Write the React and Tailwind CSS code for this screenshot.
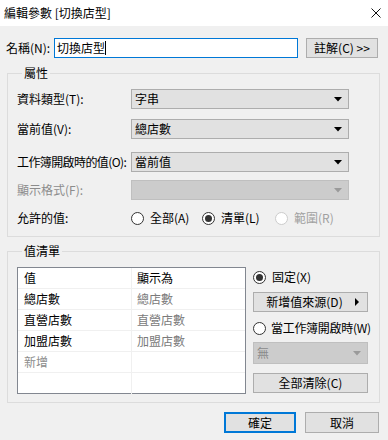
import React from "react";

const FONT = { fontFamily: '"Noto Sans CJK TC", "Noto Sans", sans-serif' };

function Arrow({ disabled }) {
  return (
    <svg width="8" height="5" viewBox="0 0 8 5" className="shrink-0">
      <polygon points="0,0 8,0 4,4.5" fill={disabled ? "#9a9a9a" : "#000"} />
    </svg>
  );
}

function Combo({ value, disabled, className = "" }) {
  return (
    <div
      className={
        "flex shrink-0 items-center justify-between border pl-[3px] pr-[6px] " +
        (disabled ? "bg-[#cccccc] border-[#bfbfbf] text-[#8a8a8a] " : "bg-[#e1e1e1] border-[#adadad] text-black ") +
        className
      }
    >
      <span>{value}</span>
      <Arrow disabled={disabled} />
    </div>
  );
}

function Radio({ checked, disabled }) {
  return (
    <span
      className={
        "flex h-[13px] w-[13px] shrink-0 items-center justify-center rounded-full border bg-white " +
        (disabled ? "border-[#cccccc]" : "border-[#333333]")
      }
    >
      {checked && <span className="h-[7px] w-[7px] rounded-full bg-[#333333]" />}
    </span>
  );
}

function Btn({ children, className = "" }) {
  return (
    <div className={"flex shrink-0 items-center justify-center whitespace-nowrap border border-[#adadad] bg-[#e1e1e1] " + className}>
      {children}
    </div>
  );
}

export default function App() {
  const rows = [
    ["值", "顯示為", true],
    ["總店數", "總店數"],
    ["直營店數", "直營店數"],
    ["加盟店數", "加盟店數"],
    ["新增", ""],
    ["", ""],
  ];
  return (
    <div style={FONT} className="h-[440px] w-[388px] overflow-hidden whitespace-nowrap bg-[#f0f0f0] text-[12px] leading-[16px] text-black">
      {/* Title bar */}
      <div className="flex h-[26px] items-center justify-between bg-white pl-[4px] pr-[7px]">
        <span className="text-[12px]">編輯參數 [切換店型]</span>
        <svg width="10" height="10" viewBox="0 0 10 10">
          <path d="M0.5 0.5 L9.5 9.5 M9.5 0.5 L0.5 9.5" stroke="#111" strokeWidth="1" />
        </svg>
      </div>

      {/* Name row */}
      <div className="mt-[12px] flex h-[20px] items-center pl-[6px]">
        <span className="w-[48px] shrink-0">名稱(N):</span>
        <div className="flex h-[20px] w-[244px] shrink-0 items-center border border-[#0078d7] bg-white pl-[2px]">
          <span>切換店型</span>
          <span className="h-[14px] w-px bg-black" />
        </div>
        <Btn className="ml-[8px] h-[20px] w-[72px]">註解(C) &gt;&gt;</Btn>
      </div>

      {/* 屬性 group */}
      <fieldset className="mx-[7px] mt-[7px] w-[373px] border border-[#dcdcdc] pb-[8px] pl-[9px]">
        <legend className="ml-[5px] px-[2px]">屬性</legend>
        <div className="mt-[8px] flex h-[20px] items-center">
          <span className="w-[114px] shrink-0">資料類型(T):</span>
          <Combo value="字串" className="h-[20px] w-[218px]" />
        </div>
        <div className="mt-[10px] flex h-[20px] items-center">
          <span className="w-[114px] shrink-0">當前值(V):</span>
          <Combo value="總店數" className="h-[20px] w-[218px]" />
        </div>
        <div className="mt-[13px] flex h-[20px] items-center">
          <span className="w-[114px] shrink-0 tracking-[-0.6px]">工作簿開啟時的值(O):</span>
          <Combo value="當前值" className="h-[20px] w-[218px]" />
        </div>
        <div className="mt-[8px] flex h-[20px] items-center">
          <span className="w-[114px] shrink-0 text-[#8c8c8c]">顯示格式(F):</span>
          <Combo value="" disabled className="h-[20px] w-[218px]" />
        </div>
        <div className="mt-[8px] flex h-[20px] items-center">
          <span className="w-[114px] shrink-0">允許的值:</span>
          <div className="flex items-center">
            <Radio />
            <span className="ml-[6px] w-[52px]">全部(A)</span>
            <Radio checked />
            <span className="ml-[6px] w-[54px]">清單(L)</span>
            <Radio disabled />
            <span className="ml-[6px] text-[#a0a0a0]">範圍(R)</span>
          </div>
        </div>
      </fieldset>

      {/* 值清單 group */}
      <fieldset className="mx-[7px] mt-[6px] w-[373px] border border-[#dcdcdc] pb-[8px] pl-[9px]">
        <legend className="ml-[5px] px-[2px]">值清單</legend>
        <div className="mt-[8px] flex">
          <div className="flex h-[127px] w-[229px] shrink-0 flex-col border border-[#828790] bg-white">
            {rows.map((r, i) => (
              <div
                key={i}
                className={"flex h-[21px] shrink-0 " + (i < rows.length - 1 ? "border-b border-[#f0f0f0]" : "")}
              >
                <div className={"flex w-[114px] items-center border-r border-[#f0f0f0] pl-[6px] " + (r[0] === "新增" ? "text-[#8c8c8c]" : "")}>
                  {r[0]}
                </div>
                <div className={"flex flex-1 items-center pl-[5px] " + (r[2] ? "text-black" : "text-[#7a7a7a]")}>{r[1]}</div>
              </div>
            ))}
          </div>
          <div className="ml-[7px] flex w-[115px] shrink-0 flex-col">
            <div className="flex h-[20px] items-center">
              <Radio checked />
              <span className="ml-[6px]">固定(X)</span>
            </div>
            <div className="mt-[5px] flex h-[20px] items-center border border-[#adadad] bg-[#e1e1e1] pr-[8px]">
              <span className="flex-1 text-center">新增值來源(D)</span>
              <svg width="4" height="8" viewBox="0 0 4 8">
                <polygon points="0,0 4,4 0,8" fill="#000" />
              </svg>
            </div>
            <div className="mt-[6px] flex h-[20px] items-center">
              <Radio />
              <span className="ml-[5px] tracking-[-0.3px]">當工作簿開啟時(W)</span>
            </div>
            <Combo value="無" disabled className="mt-[4px] h-[22px]" />
            <Btn className="mt-[9px] h-[20px]">全部清除(C)</Btn>
          </div>
        </div>
      </fieldset>

      {/* Bottom buttons */}
      <div className="mt-[9px] flex justify-end pr-[9px]">
        <div className="flex h-[21px] w-[72px] items-center justify-center border-2 border-[#0078d7] bg-[#e1e1e1]">確定</div>
        <Btn className="ml-[9px] h-[21px] w-[74px]">取消</Btn>
      </div>
    </div>
  );
}
